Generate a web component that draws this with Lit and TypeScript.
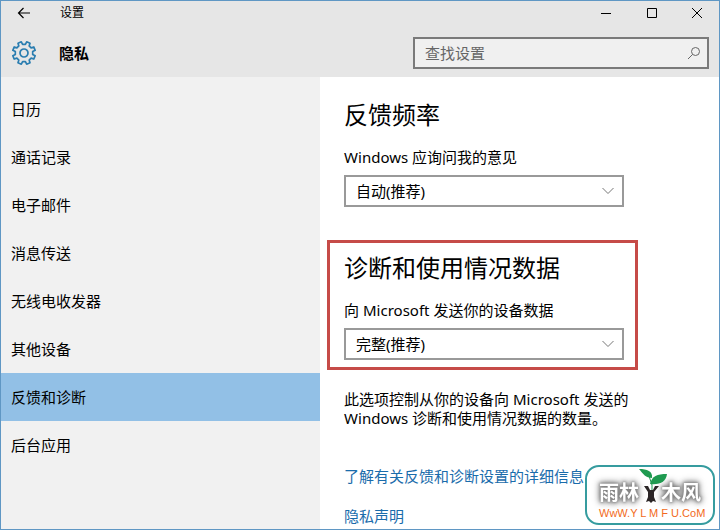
import { LitElement, html, css } from "lit";
import { customElement } from "lit/decorators.js";
import { classMap } from "lit/directives/class-map.js";

const NAV = ["日历", "通话记录", "电子邮件", "消息传送", "无线电收发器", "其他设备", "反馈和诊断", "后台应用"];
const ACTIVE = "反馈和诊断";

function gearPath(teeth: number, outer: number, inner: number): string {
  const points: string[] = [];
  const step = (Math.PI * 2) / teeth;
  for (let i = 0; i < teeth; i++) {
    const mid = i * step + step / 2 - Math.PI / 2;
    const corners: [number, number][] = [
      [inner, -0.3], [outer, -0.2], [outer, 0.2], [inner, 0.3],
    ];
    for (const [r, f] of corners) {
      const a = mid + f * step;
      points.push(`${(r * Math.cos(a)).toFixed(2)} ${(r * Math.sin(a)).toFixed(2)}`);
    }
  }
  return `M${points.join("L")}Z`;
}

@customElement("setting-select")
class SettingSelect extends LitElement {
  static properties = { label: {}, value: {} };
  declare label: string;
  declare value: string;

  static styles = css`
    :host { display: block; }
    label { display: block; font-size: 15px; line-height: 20px; margin-bottom: 8px; }
    .box { display: grid; max-width: 280px; align-items: center; }
    select {
      grid-area: 1 / 1; appearance: none; width: 100%; height: 32px; margin: 0; padding: 0 32px 0 10px;
      border: 2px solid #999; border-radius: 0; background: #fff; color: #000;
      font: inherit; font-size: 15px;
    }
    svg { grid-area: 1 / 1; justify-self: end; margin-right: 9px; pointer-events: none; }
  `;

  render() {
    return html`
      <label for="s">${this.label}</label>
      <div class="box">
        <select id="s"><option selected>${this.value}</option></select>
        <svg width="14" height="8" viewBox="0 0 14 8" fill="none" stroke="#777"><path d="M1.500 1L7 6.500L12.500 1" /></svg>
      </div>
    `;
  }
}

@customElement("app-root")
class AppRoot extends LitElement {
  static styles = css`
    * { box-sizing: border-box; }
    :host {
      position: relative; display: flex; flex-direction: column; box-sizing: border-box; min-height: 100vh;
      border: 1px solid #5f97c4; background: #fff; color: #000;
      font-family: "Noto Sans", "Noto Sans CJK SC", sans-serif; font-size: 15px; line-height: 20px;
    }
    header { background: #e6e6e6; }
    button { border: 0; padding: 0; background: none; color: inherit; display: grid; place-items: center; height: 24px; }
    .titlebar { display: flex; align-items: center; height: 24px; }
    .back { width: 46px; }
    .title { flex: 1; margin-left: 13px; font-size: 12px; }
    .win { width: 46px; }
    .win:last-child { width: 44px; }
    .bar { display: flex; align-items: center; height: 52px; padding: 4px 10px 0; }
    .page { flex: 1; margin: 0 0 0 22px; font-size: 15px; line-height: 20px; font-weight: 700; }
    .search {
      display: flex; align-items: center; flex: 0 1 296px; height: 32px; padding: 0 6px 0 10px;
      border: 2px solid #7a7a7a; background: #f0f0f0;
    }
    input { flex: 1; min-width: 0; border: 0; padding: 0; outline: 0; background: none; font: inherit; }
    input::placeholder { color: #666; opacity: 1; }
    .body { flex: 1; display: grid; grid-template-columns: 4fr 5fr; }
    nav { background: #f1f1f1; padding-top: 8px; }
    nav a { display: flex; align-items: center; height: 48px; padding-left: 10px; color: #000; text-decoration: none; }
    nav a.active { background: #92c0e6; }
    main { padding: 20px 24px 0; }
    h2 { margin: 0 0 14px; font-size: 24px; line-height: 36px; font-weight: 400; }
    .marked {
      width: fit-content; min-width: 311px; margin: 33px 0 0 -17px; padding: 7px 11px 7px 14px;
      border: 3px solid #c64b48;
    }
    .note { margin: 20px 0 0; line-height: 19px; max-width: 304px; }
    .link { display: table; margin-top: 38px; color: #1a6cab; text-decoration: none; }
    .link + .link { margin-top: 20px; }
    .stamp {
      position: absolute; right: 4px; bottom: 4px; width: 130px; height: 60px;
      border: 2px solid #369c9f; border-radius: 14px; background: #fff;
    }
    .stamp svg { display: block; }
    .stamp .name {
      font-family: "Noto Sans CJK SC", sans-serif; font-size: 20px; font-weight: 700; fill: #fff;
      filter: drop-shadow(0 0 1px #888) drop-shadow(0 0 2px #777) drop-shadow(0 0 3px #999);
    }
    .stamp .site { font-family: "Liberation Sans", sans-serif; font-size: 11px; fill: #f26a21; }
  `;

  render() {
    return html`
      <header>
        <div class="titlebar">
          <button class="back" aria-label="返回">
            <svg width="14" height="12" viewBox="0 0 14 12" fill="none" stroke="#000" stroke-width="1.2"><path d="M1.500 6H13M6.500 1L1.500 6L6.500 11" /></svg>
          </button>
          <span class="title">设置</span>
          <button class="win" aria-label="最小化"><svg width="10" height="10" stroke="#000"><path d="M0 5.500H10" /></svg></button>
          <button class="win" aria-label="最大化"><svg width="10" height="10" stroke="#000" fill="none"><path d="M.5 .5H9.500V9.500H.5Z" /></svg></button>
          <button class="win" aria-label="关闭"><svg width="10" height="10" stroke="#000"><path d="M0 0L10 10M10 0L0 10" /></svg></button>
        </div>
        <div class="bar">
          <svg width="26" height="26" viewBox="-13 -13 26 26" fill="none" stroke="#2a7db0" stroke-width="1.700" stroke-linejoin="round">
            <path d=${gearPath(8, 11.5, 8.8)} /><circle r="4" />
          </svg>
          <h1 class="page">隐私</h1>
          <div class="search">
            <input type="search" aria-label="查找设置" placeholder="查找设置" />
            <svg width="14" height="14" viewBox="0 0 14 14" fill="none" stroke="#666"><circle cx="8.500" cy="5.500" r="4" /><path d="M5.500 8.500L1 13" /></svg>
          </div>
        </div>
      </header>
      <div class="body">
        <nav>
          ${NAV.map((n) => html`<a href="#" class=${classMap({ active: n === ACTIVE })}>${n}</a>`)}
        </nav>
        <main>
          <h2>反馈频率</h2>
          <setting-select label="Windows 应询问我的意见" value="自动(推荐)"></setting-select>
          <section class="marked">
            <h2>诊断和使用情况数据</h2>
            <setting-select label="向 Microsoft 发送你的设备数据" value="完整(推荐)"></setting-select>
          </section>
          <p class="note">此选项控制从你的设备向 Microsoft 发送的 Windows 诊断和使用情况数据的数量。</p>
          <a class="link" href="#">了解有关反馈和诊断设置的详细信息</a>
          <a class="link" href="#">隐私声明</a>
        </main>
      </div>
      <div class="stamp">
        <svg width="126" height="56" viewBox="0 0 126 56">
          <text class="name" x="12" y="33">雨林</text>
          <text class="name" x="74" y="33">木风</text>
          <path fill="#2b2526" d="M57 19L61 19L63 23L66 23L68 19L72 19L67 25L67 30L69 35L66 34L64 36L62 34L59 35L61 30L61 25Z" />
          <path fill="#1f9a50" d="M52 2C60 2 66 4 65 11C59 11 56 7 52 2Z" />
          <path fill="#1f9a50" d="M80 7C79 15 73 18 63 17C65 9 70 7 80 7Z" />
          <path d="M62 9L65 18V23" fill="none" stroke="#1f9a50" />
          <text class="site" x="12" y="50">WwW.Y L M F U.CoM</text>
        </svg>
      </div>
    `;
  }
}
